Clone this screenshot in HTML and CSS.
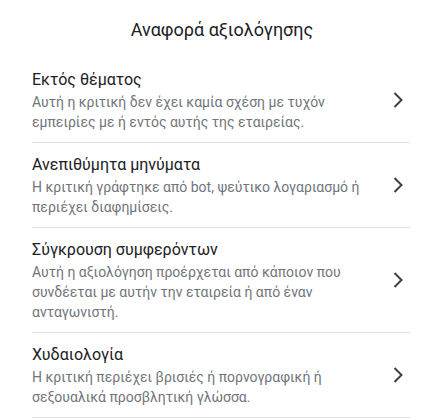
FILE: index.html
```html
<!DOCTYPE html>
<html lang="el">
<head>
<meta charset="utf-8">
<link rel="stylesheet" href="styles.css">
</head>
<body>
<div class="dialog">
  <h1 class="heading">Αναφορά αξιολόγησης</h1>
  <ul class="list">
    <li class="item">
      <div class="text">
        <div class="title">Εκτός θέματος</div>
        <div class="desc">Αυτή η κριτική δεν έχει καμία σχέση με τυχόν εμπειρίες με ή εντός αυτής της εταιρείας.</div>
      </div>
      <svg class="chev" viewBox="0 0 24 24"><polyline points="8.5,5 15.5,12 8.5,19"/></svg>
    </li>
    <li class="item">
      <div class="text">
        <div class="title">Ανεπιθύμητα μηνύματα</div>
        <div class="desc">Η κριτική γράφτηκε από bot, ψεύτικο λογαριασμό ή περιέχει διαφημίσεις.</div>
      </div>
      <svg class="chev" viewBox="0 0 24 24"><polyline points="8.5,5 15.5,12 8.5,19"/></svg>
    </li>
    <li class="item">
      <div class="text">
        <div class="title">Σύγκρουση συμφερόντων</div>
        <div class="desc">Αυτή η αξιολόγηση προέρχεται από κάποιον που συνδέεται με αυτήν την εταιρεία ή από έναν ανταγωνιστή.</div>
      </div>
      <svg class="chev" viewBox="0 0 24 24"><polyline points="8.5,5 15.5,12 8.5,19"/></svg>
    </li>
    <li class="item">
      <div class="text">
        <div class="title">Χυδαιολογία</div>
        <div class="desc">Η κριτική περιέχει βρισιές ή πορνογραφική ή σεξουαλικά προσβλητική γλώσσα.</div>
      </div>
      <svg class="chev" viewBox="0 0 24 24"><polyline points="8.5,5 15.5,12 8.5,19"/></svg>
    </li>
  </ul>
</div>
</body>
</html>
```
FILE: styles.css
```css
html, body {
  margin: 0;
  padding: 0;
  background: #fff;
}
body {
  font-family: Roboto, "Noto Sans", sans-serif;
  color: #202124;
}
.dialog {
  width: 437px;
  padding: 18px 27px 0 32px;
  box-sizing: border-box;
}
.heading {
  margin: 0 0 16px 0;
  font-size: 18px;
  line-height: 24px;
  font-weight: 400;
  text-align: center;
  padding-left: 2px;
}
.list {
  list-style: none;
  margin: 0;
  padding: 0;
}
.item {
  display: flex;
  align-items: center;
  gap: 16px;
  padding: 10px 0;
  border-bottom: 1px solid #e0e0e0;
}
.text {
  flex: 1;
  min-width: 0;
}
.title {
  font-size: 16px;
  line-height: 24px;
  color: #202124;
}
.desc {
  font-size: 14px;
  line-height: 20px;
  color: #70757a;
}
.chev {
  width: 24px;
  height: 24px;
  flex: none;
  fill: none;
  stroke: #3c4043;
  stroke-width: 2;
}
```
